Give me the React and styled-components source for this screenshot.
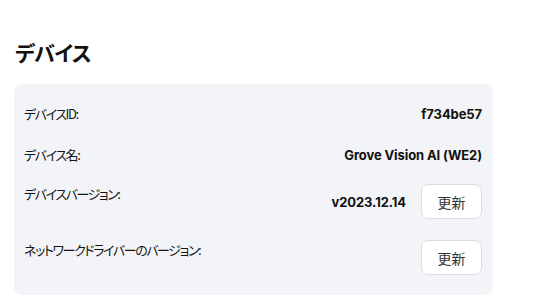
import React from "react";
import styled, { createGlobalStyle } from "styled-components";

const Global = createGlobalStyle`
  html, body { margin: 0; padding: 0; background: #fff; }
  body { font-family: "Noto Sans CJK JP", "Noto Sans", sans-serif; color: #1a1a1a; }
`;

const Page = styled.div`
  padding: 0 14px;
  width: 479px;
`;

const Title = styled.h2`
  margin: 0;
  padding: 36px 0 16px 1px;
  font-size: 21px;
  line-height: 32px;
  font-weight: 700;
  font-feature-settings: "palt";
  letter-spacing: -0.6px;
  color: #111;
`;

const Card = styled.div`
  background: #f3f4f7;
  border-radius: 8px;
  padding: 20px 11px 20px 10px;
  display: flex;
  flex-direction: column;
  gap: 20px;
`;

const Row = styled.div`
  display: flex;
  justify-content: space-between;
  align-items: flex-start;
  min-height: 20px;
  margin-top: ${(p) => p.$shift || 0}px;
`;

const Label = styled.span`
  font-size: 13px;
  line-height: 20px;
  font-feature-settings: "palt";
  color: #141414;
  letter-spacing: -1.4px;
`;

const Right = styled.div`
  display: flex;
  align-items: center;
  gap: 15px;
`;

const Value = styled.span`
  font-family: Inter, "Noto Sans", sans-serif;
  font-size: 13px;
  font-weight: 700;
  line-height: 20px;
  color: #111;
  letter-spacing: -0.1px;
`;

const Button = styled.button`
  width: 61px;
  height: 35px;
  border: 1px solid #dcdcdc;
  border-radius: 7px;
  background: #fff;
  font-family: "Noto Sans CJK JP", sans-serif;
  font-size: 14px;
  color: #333;
  padding: 0;
  cursor: pointer;
`;

export default function App() {
  return (
    <>
      <Global />
      <Page>
        <Title>デバイス</Title>
        <Card>
          <Row>
            <Label>デバイスID:</Label>
            <Value>f734be57</Value>
          </Row>
          <Row $shift={1}>
            <Label>デバイス名:</Label>
            <Value>Grove Vision AI (WE2)</Value>
          </Row>
          <Row $shift={-1}>
            <Label>デバイスバージョン:</Label>
            <Right>
              <Value>v2023.12.14</Value>
              <Button>更新</Button>
            </Right>
          </Row>
          <Row $shift={1}>
            <Label>ネットワークドライバーのバージョン:</Label>
            <Right>
              <Button>更新</Button>
            </Right>
          </Row>
        </Card>
      </Page>
    </>
  );
}
